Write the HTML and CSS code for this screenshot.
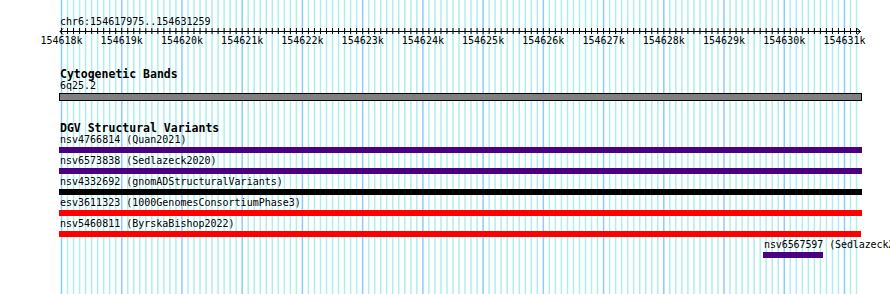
FILE: index.html
```html
<!DOCTYPE html>
<html lang="en">
<head>
<meta charset="UTF-8">
<title>chr6:154617975..154631259</title>
<link rel="stylesheet" href="styles.css">
</head>
<body>
<div class="view">
    <svg class="grid" id="grid" width="803" height="294"></svg>

    <div class="locus">chr6:154617975..154631259</div>
    <svg class="ruler" id="ruler" width="803" height="7"></svg>
    <div class="scale">
        <span class="tick-label" style="left:2.5px">154618k</span>
        <span class="tick-label" style="left:62.7px">154619k</span>
        <span class="tick-label" style="left:123px">154620k</span>
        <span class="tick-label" style="left:183.2px">154621k</span>
        <span class="tick-label" style="left:243.4px">154622k</span>
        <span class="tick-label" style="left:303.7px">154623k</span>
        <span class="tick-label" style="left:363.9px">154624k</span>
        <span class="tick-label" style="left:424.1px">154625k</span>
        <span class="tick-label" style="left:484.3px">154626k</span>
        <span class="tick-label" style="left:544.6px">154627k</span>
        <span class="tick-label" style="left:604.8px">154628k</span>
        <span class="tick-label" style="left:665px">154629k</span>
        <span class="tick-label" style="left:725.3px">154630k</span>
        <span class="tick-label" style="left:785.5px">154631k</span>
    </div>

    <section class="track">
        <h2 class="track-title">Cytogenetic Bands</h2>
        <div class="feature">
            <div class="feature-label">6q25.2</div>
            <div class="band"></div>
        </div>
    </section>

    <section class="track dgv">
        <h2 class="track-title">DGV Structural Variants</h2>
        <div class="feature">
            <div class="feature-label">nsv4766814 (Quan2021)</div>
            <div class="bar purple"></div>
        </div>
        <div class="feature">
            <div class="feature-label">nsv6573838 (Sedlazeck2020)</div>
            <div class="bar purple"></div>
        </div>
        <div class="feature">
            <div class="feature-label">nsv4332692 (gnomADStructuralVariants)</div>
            <div class="bar black"></div>
        </div>
        <div class="feature">
            <div class="feature-label">esv3611323 (1000GenomesConsortiumPhase3)</div>
            <div class="bar red"></div>
        </div>
        <div class="feature">
            <div class="feature-label">nsv5460811 (ByrskaBishop2022)</div>
            <div class="bar red" style="width:802px"></div>
        </div>
        <div class="feature" style="margin-left:704px">
            <div class="feature-label narrow">nsv6567597 (Sedlazeck2020)</div>
            <div class="bar purple" style="width:60px"></div>
        </div>
    </section>
</div>

<script>
const pxPer100 = 6.023;

function drawGrid() {
    let lines = '';
    for (let i = 0; i <= 132; i++) {
        const x = 2.5 + i * pxPer100;
        lines += `<line x1="${x}" x2="${x}" y1="0" y2="294" class="${i % 10 === 0 ? 'major' : 'minor'}"/>`;
    }
    document.getElementById('grid').innerHTML = lines;
}

function drawRuler() {
    let parts = '<line x1="1" x2="802" y1="3.5" y2="3.5"/>';
    for (let i = 0; i <= 132; i++) {
        const x = 2.5 + i * pxPer100;
        parts += `<line x1="${x}" x2="${x}" y1="0" y2="6"/>`;
    }
    parts += '<polyline points="4,0.5 1,3.5 4,6.5"/>';
    parts += '<polyline points="798,0.5 801.5,3.5 798,6.5"/>';
    document.getElementById('ruler').innerHTML = parts;
}

drawGrid();
drawRuler();
</script>
</body>
</html>
```

FILE: styles.css
```css
html, body {
    margin: 0;
    padding: 0;
    overflow: hidden;
    background: #fff;
}
body {
    font-family: "DejaVu Sans Mono", monospace;
    font-size: 10px;
    color: #000;
}
.view {
    position: relative;
    z-index: 0;
    margin-left: 59px;
    width: 803px;
    height: 294px;
}
.grid {
    position: absolute;
    top: 0;
    left: 0;
    z-index: -1;
}
.grid line { stroke-width: 1.5; }
.grid .minor { stroke: paleturquoise; }
.grid .major { stroke: lightskyblue; }

.locus {
    padding: 16px 0 0 1px;
    line-height: 12px;
}
.ruler {
    display: block;
    overflow: visible;
}
.ruler line, .ruler polyline {
    stroke: #000;
    stroke-width: 1;
    fill: none;
}
.scale {
    position: relative;
    height: 12px;
    line-height: 12px;
}
.tick-label {
    position: absolute;
    top: 0;
    transform: translateX(-50%);
    white-space: nowrap;
}

.track-title {
    margin: 21px 0 0;
    padding-left: 1px;
    font-size: 11.5px;
    line-height: 12px;
    font-weight: bold;
}
.feature-label {
    padding-left: 1px;
    line-height: 12px;
    white-space: nowrap;
}
.narrow { letter-spacing: -0.1px; }
.band {
    margin-top: 1px;
    height: 6px;
    border: 1px solid #000;
    background: #808080;
}
.bar {
    height: 6px;
    margin: 1px 0 2px;
}
.purple { background: #4b0082; }
.black { background: #000; }
.red { background: #f00; }
```
